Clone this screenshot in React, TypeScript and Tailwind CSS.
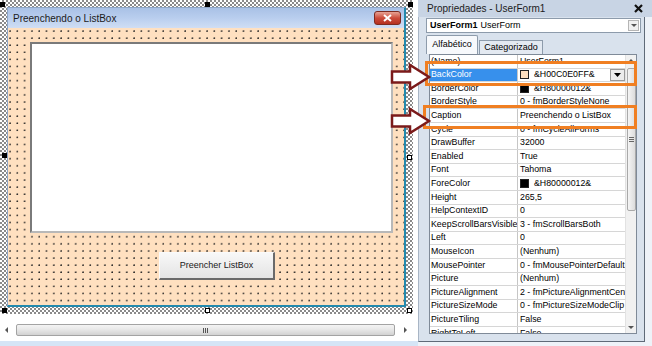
import React from "react";

type Row = { name: string; value: string; swatch?: string; sel?: boolean; dd?: boolean };

const rows: Row[] = [
  { name: "(Name)", value: "UserForm1" },
  { name: "BackColor", value: "&H00C0E0FF&", swatch: "bg-[#ffe0c0]", sel: true, dd: true },
  { name: "BorderColor", value: "&H80000012&", swatch: "bg-black" },
  { name: "BorderStyle", value: "0 - fmBorderStyleNone" },
  { name: "Caption", value: "Preenchendo o ListBox" },
  { name: "Cycle", value: "0 - fmCycleAllForms" },
  { name: "DrawBuffer", value: "32000" },
  { name: "Enabled", value: "True" },
  { name: "Font", value: "Tahoma" },
  { name: "ForeColor", value: "&H80000012&", swatch: "bg-black" },
  { name: "Height", value: "265,5" },
  { name: "HelpContextID", value: "0" },
  { name: "KeepScrollBarsVisible", value: "3 - fmScrollBarsBoth" },
  { name: "Left", value: "0" },
  { name: "MouseIcon", value: "(Nenhum)" },
  { name: "MousePointer", value: "0 - fmMousePointerDefault" },
  { name: "Picture", value: "(Nenhum)" },
  { name: "PictureAlignment", value: "2 - fmPictureAlignmentCenter" },
  { name: "PictureSizeMode", value: "0 - fmPictureSizeModeClip" },
  { name: "PictureTiling", value: "False" },
  { name: "RightToLeft", value: "False" },
];

function Handle({ className, white }: { className: string; white?: boolean }) {
  return (
    <div
      className={
        "absolute w-[5px] h-[5px] " +
        (white ? "bg-white border border-black " : "bg-black ") +
        className
      }
    />
  );
}

function Tri({ dir, className }: { dir: "up" | "down" | "left" | "right"; className?: string }) {
  const pts =
    dir === "up"
      ? "0,4 3,1 6,4"
      : dir === "down"
      ? "0,1 3,4 6,1"
      : dir === "left"
      ? "4,0 1,3 4,6"
      : "1,0 4,3 1,6";
  return (
    <svg width="6" height="6" viewBox="0 0 6 6" className={className}>
      <polygon points={pts} fill="#555" />
    </svg>
  );
}

export default function App() {
  return (
    <div className="relative w-[652px] h-[346px] bg-white flex overflow-hidden font-['Liberation_Sans',Arial,sans-serif] text-black">
      {/* Left: form designer */}
      <div className="w-[418px] h-full flex flex-col">
        <div className="relative w-[413px] h-[314px] p-[7px] bg-[repeating-conic-gradient(#8a8a8a_0_25%,#ffffff_0_50%)] bg-[length:4px_4px]">
          <div className="w-full h-full flex flex-col border-l border-t border-l-[#8ea6c6] border-t-[#8ea6c6] border-r-2 border-b-2 border-r-[#2389ad] border-b-[#2389ad]">
            <div className="h-[20px] flex items-center justify-between pl-[5px] pr-[3px] bg-gradient-to-b from-[#a9c1e6] via-[#b9ceee] to-[#d0def3] text-[10px] text-[#1b1b1b]">
              <span>Preenchendo o ListBox</span>
              <div className="w-[27px] h-[14px] rounded-[3px] border border-[#7d2a20] bg-gradient-to-b from-[#e6a295] via-[#cc4b3b] to-[#b5301f] flex items-center justify-center">
                <svg width="9" height="8" viewBox="0 0 9 8">
                  <path d="M1 1 L8 7 M8 1 L1 7" stroke="#fff" strokeWidth="2" />
                </svg>
              </div>
            </div>
            <div className="flex-1 flex flex-col pl-[22px] pt-[14px] bg-[#ffe0c0] bg-[radial-gradient(circle_at_1px_1px,#222_0.55px,transparent_0.9px)] bg-[length:7.3px_7.1px] bg-[position:1px_2px]">
              <div className="w-[363px] h-[191px] bg-white border-2 border-t-[#7a7a7a] border-l-[#7a7a7a] border-r-[#b8b8b8] border-b-[#b8b8b8]" />
              <div className="ml-[129px] mt-[19px] w-[116px] h-[28px] flex items-center justify-center border-t border-l border-t-[#fafafa] border-l-[#fafafa] border-r-2 border-b-2 border-r-[#6a6a6a] border-b-[#6a6a6a] bg-gradient-to-b from-[#f8f8f8] to-[#e4e4e4] text-[9px] text-[#1a1a1a]">
                Preencher ListBox
              </div>
            </div>
          </div>
          <Handle className="left-0 top-[2px]" />
          <Handle className="left-[205px] top-[2px]" />
          <Handle className="left-[408px] top-[2px]" />
          <Handle className="left-[2px] top-[153px]" />
          <Handle className="left-[407px] top-[155px]" white />
          <Handle className="left-[2px] top-[308px]" />
          <Handle className="left-[205px] top-[308px]" white />
          <Handle className="left-[407px] top-[308px]" white />
        </div>
        {/* horizontal scrollbar */}
        <div className="mt-[9px] h-[14px] w-[413px] flex items-center">
          <div className="w-[13px] h-[14px] flex items-center justify-center">
            <Tri dir="left" />
          </div>
          <div className="ml-[3px] w-[379px] h-[12px] rounded-[2px] border border-[#a3a3a3] bg-gradient-to-b from-[#f4f4f4] via-[#e6e6e6] to-[#d2d2d2] flex items-center justify-center">
            <div className="flex gap-[1px]">
              <div className="w-[1px] h-[5px] bg-[#555]" />
              <div className="w-[1px] h-[5px] bg-[#555]" />
              <div className="w-[1px] h-[5px] bg-[#555]" />
            </div>
          </div>
          <div className="ml-[5px] w-[12px] h-[14px] flex items-center justify-center">
            <Tri dir="right" />
          </div>
        </div>
        <div className="flex-1" />
        <div className="h-[5px] bg-[#d5e5f6]" />
      </div>

      {/* Right: properties window */}
      <div className="w-[234px] h-full flex flex-col bg-[#eef2f8]">
        <div className="h-[17px] flex items-center justify-between pl-[9px] pr-[9px] bg-[#c8d4e4] text-[10px] text-[#1c1c1c]">
          <span>Propriedades - UserForm1</span>
          <svg width="9" height="9" viewBox="0 0 9 9">
            <path d="M1 1 L8 8 M8 1 L1 8" stroke="#111" strokeWidth="2.2" />
          </svg>
        </div>
        <div className="w-[227px] h-[325px] flex flex-col pl-[7px] bg-[#d9e2ed] border-l border-l-[#a8b5c5] border-r border-b border-r-[#5f6a78] border-b-[#5f6a78]">
          <div className="mt-[1px] w-[215px] h-[15px] bg-white border border-[#8d9bab] flex items-center pl-[3px] text-[9px] leading-none">
            <span className="font-bold">UserForm1</span>
            <span className="ml-[3px]">UserForm</span>
            <div className="ml-auto mr-[1px] w-[11px] h-[11px] bg-[#f0f0f0] border border-[#b5b5b5] flex items-center justify-center">
              <Tri dir="down" />
            </div>
          </div>
          <div className="mt-[2px] h-[19px] flex items-end text-[9px]">
            <div className="w-[52px] h-[19px] flex items-center justify-center border border-b-0 border-[#8d9bab] bg-[#f7f9fc] rounded-t-[2px]">
              Alfabético
            </div>
            <div className="ml-[1px] w-[64px] h-[14px] flex items-center justify-center border border-b-0 border-[#8d9bab] bg-[#e3e9f1]">
              Categorizado
            </div>
          </div>
          <div className="ml-[3px] w-[208px] h-[280px] flex bg-white border border-[#7f8a98] overflow-hidden text-[8.8px]">
            <div className="w-[195px] flex flex-col">
              {rows.map((r) => (
                <div key={r.name} className="h-[13.6px] shrink-0 flex border-b border-[#d6d6d6]">
                  <div
                    className={
                      "w-[88px] shrink-0 pl-[1px] flex items-center whitespace-nowrap overflow-hidden border-r border-[#c6c6c6] " +
                      (r.sel ? "bg-[#3790ec] text-white" : "")
                    }
                  >
                    {r.name}
                  </div>
                  <div className="flex-1 min-w-0 pl-[2px] flex items-center whitespace-nowrap overflow-hidden">
                    {r.swatch && (
                      <div className={"w-[9px] h-[9px] shrink-0 border border-[#222] mr-[5px] " + r.swatch} />
                    )}
                    <span>{r.value}</span>
                    {r.dd && (
                      <div className="ml-auto w-[15px] h-[12px] shrink-0 bg-[#ececec] border border-[#9a9a9a] flex items-center justify-center">
                        <svg width="7" height="4" viewBox="0 0 7 4">
                          <polygon points="0,0 7,0 3.5,4" fill="#000" />
                        </svg>
                      </div>
                    )}
                  </div>
                </div>
              ))}
            </div>
            <div className="w-[11px] flex flex-col items-center bg-[#f1f1f1] border-l border-[#e2e2e2]">
              <div className="h-[11px] flex items-center justify-center">
                <Tri dir="up" />
              </div>
              <div className="mt-[2px] w-[9px] h-[143px] rounded-[2px] border border-[#a9a9a9] bg-gradient-to-r from-[#f5f5f5] to-[#dcdcdc] flex flex-col items-center justify-center gap-[1px]">
                <div className="w-[5px] h-[1px] bg-[#666]" />
                <div className="w-[5px] h-[1px] bg-[#666]" />
                <div className="w-[5px] h-[1px] bg-[#666]" />
              </div>
              <div className="flex-1" />
              <div className="h-[11px] flex items-center justify-center">
                <Tri dir="down" />
              </div>
            </div>
          </div>
        </div>
      </div>

      {/* annotations */}
      <svg className="absolute left-0 top-0 pointer-events-none" width="652" height="346" viewBox="0 0 652 346">
        <rect x="426.5" y="62.5" width="209" height="22" fill="none" stroke="#f07f22" strokeWidth="3" />
        <rect x="424.5" y="106.5" width="211" height="21" fill="none" stroke="#f07f22" strokeWidth="3" />
        <polygon
          points="392,71.5 410,71.5 410,65 429,77 410,89 410,82.5 392,82.5"
          fill="#fff"
          stroke="#7b1a1a"
          strokeWidth="2.5"
        />
        <polygon
          points="392,115.5 410,115.5 410,109 429,121 410,133 410,126.5 392,126.5"
          fill="#fff"
          stroke="#7b1a1a"
          strokeWidth="2.5"
        />
      </svg>
    </div>
  );
}
